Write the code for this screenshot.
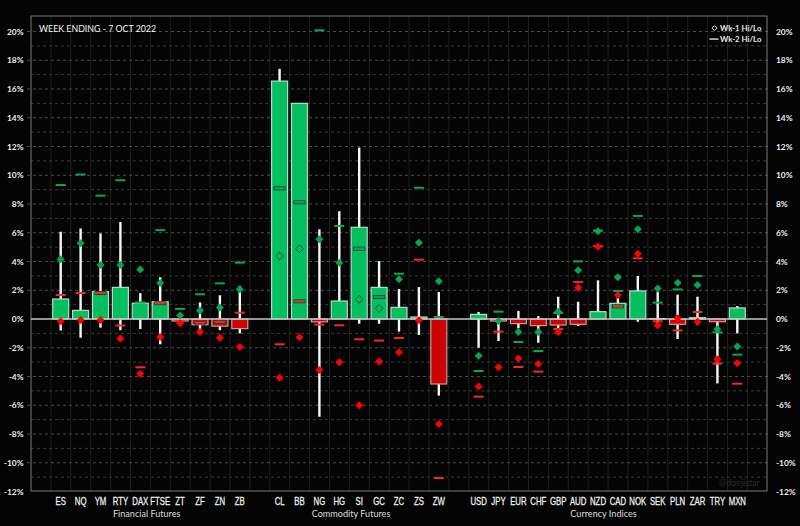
const FONT = "Lato, 'Open Sans', sans-serif";
const TICK_FONT = "'Liberation Sans', Arial, sans-serif";

const LEFT = 31;
const RIGHT = 767;
const TOP = 16;
const BOTTOM = 491;
const ZERO = 319;
const PCT = 14.375;
const SLOT = 19.9;

const y = (v) => ZERO - v * PCT;
const cx = (i) => 60.7 + SLOT * i;

// name, slot, close, wick hi, wick lo, wk1 hi, wk1 lo, wk2 hi, wk2 lo
const rows = [
  ["ES", 0, 1.39, 6.07, -0.8, 4.15, -0.16, 9.32, 1.67],
  ["NQ", 1, 0.6, 6.3, -1.3, 5.27, -0.07, 10.05, 1.81],
  ["YM", 2, 1.9, 5.95, -0.6, 3.75, -0.07, 8.58, 1.81],
  ["RTY", 3, 2.2, 6.75, -0.78, 3.75, -1.35, 9.65, -0.45],
  ["DAX", 4, 1.1, 1.8, -0.7, 3.45, -3.8, 1.15, -3.36],
  ["FTSE", 5, 1.2, 2.9, -1.76, 2.5, -1.25, 6.18, 1.1],
  ["ZT", 6, -0.14, 0, 0, 0.25, -0.32, 0.7, -0.14],
  ["ZF", 7, -0.4, 1.15, -1.05, 0.6, -0.9, 1.72, -0.25],
  ["ZN", 8, -0.5, 1.65, -0.78, 0.8, -1.3, 2.48, -0.2],
  ["ZB", 9, -0.67, 2.3, -1.0, 2.07, -1.95, 3.92, 0.44],
  ["CL", 11, 16.55, 17.4, 0, 4.38, -4.08, 9.09, -1.76],
  ["BB", 12, 15.0, 15.0, 0, 4.89, -1.27, 8.12, 1.23],
  ["NG", 13, -0.2, 6.24, -6.8, 5.54, -3.55, 20.08, -0.39],
  ["HG", 14, 1.25, 7.5, 0, 3.92, -3.0, 6.47, -0.44],
  ["SI", 15, 6.38, 11.92, -0.33, 1.37, -6.0, 4.89, -1.41],
  ["GC", 16, 2.2, 4.03, -0.33, 0.74, -2.95, 1.53, -1.5],
  ["ZC", 17, 0.81, 2.09, -0.88, 2.76, -2.32, 3.15, -1.32],
  ["ZS", 18, 0.14, 2.22, -1.11, 5.31, -0.09, 9.13, 4.13],
  ["ZW", 19, -4.52, 1.88, -5.33, 2.62, -7.3, 0.14, -11.06],
  ["USD", 21, 0.32, 0.49, -2.0, -2.55, -4.7, -3.62, -5.4],
  ["JPY", 22, -0.14, 0, -1.53, -0.14, -3.36, 0.51, -0.88],
  ["EUR", 23, -0.32, 0.56, -0.65, -0.9, -2.74, -1.6, -3.34],
  ["CHF", 24, -0.46, 0.2, -1.65, -0.9, -3.13, -2.23, -3.66],
  ["GBP", 25, -0.42, 1.55, -0.65, 0.51, -0.9, 0.42, -0.7],
  ["AUD", 26, -0.37, 1.2, -0.49, 3.39, 2.18, 4.01, 2.57],
  ["NZD", 27, 0.51, 2.69, 0, 6.1, 5.03, 6.15, 5.08],
  ["CAD", 28, 1.09, 1.7, 0, 2.9, 1.67, 1.95, 0.88],
  ["NOK", 29, 1.95, 2.99, -0.19, 6.24, 4.54, 7.17, 4.22],
  ["SEK", 30, 0.03, 1.88, -0.3, 2.13, -0.46, 1.14, -0.16],
  ["PLN", 31, -0.37, 1.69, -1.39, 2.53, 0.05, 2.06, -0.79],
  ["ZAR", 32, 0.09, 1.55, -0.42, 2.37, -0.19, 2.99, 0.49],
  ["TRY", 33, -0.19, 0, -4.48, -0.72, -2.8, -0.93, -3.1],
  ["MXN", 34, 0.77, 0.9, -1.0, -1.92, -3.08, -2.48, -4.5],
];

const inBar = (v, close) => (close >= 0 ? v < close && v > 0 : v > close && v < 0);

function Diamond({ x, v, color, close }) {
  const py = y(v);
  const d = `M${x} ${py - 4}L${x + 4} ${py}L${x} ${py + 4}L${x - 4} ${py}Z`;
  if (color === "green" && inBar(v, close)) {
    return <path d={d} fill="#04b85c" stroke="#0b5a3a" strokeWidth="1" />;
  }
  return <path d={d} fill={color === "green" ? "#04a557" : "#ff0000"} />;
}

function Dash({ x, v, color, close }) {
  const py = y(v);
  const fill = color === "green" ? "#04a857" : "#f8281c";
  return (
    <g>
      {inBar(v, close) && (
        <rect x={x - 5.5} y={py - 1.5} width="11" height="3" fill="none" stroke="#21402f" strokeWidth="1" />
      )}
      <rect x={x - 5} y={py - 1} width="10" height="2" fill={fill} />
    </g>
  );
}

export default function App() {
  const majors = [];
  const minors = [];
  for (let v = -12; v <= 20; v++) {
    if (v % 2 === 0) majors.push(v);
    else minors.push(v);
  }
  const slots = [];
  for (let i = 1; i < 37; i++) slots.push(LEFT + SLOT * i);

  return (
    <div className="w-[800px] h-[526px] overflow-hidden bg-[#040404]">
      <svg width="800" height="526" viewBox="0 0 800 526" className="block">
        {slots.map((x) => (
          <line key={x} x1={x} x2={x} y1={TOP} y2={BOTTOM} stroke="#1e1e1e" />
        ))}
        {minors.map((v) => (
          <line key={v} x1={LEFT} x2={RIGHT} y1={y(v)} y2={y(v)} stroke="#3a3a3a" strokeDasharray="3 3" />
        ))}
        {majors.filter((v) => v !== 0 && v !== -12).map((v) => (
          <line key={v} x1={LEFT - 4} x2={RIGHT + 4} y1={y(v)} y2={y(v)} stroke="#4c4c4c" strokeDasharray="3 3" />
        ))}
        <rect x={LEFT} y={TOP} width={RIGHT - LEFT} height={BOTTOM - TOP} fill="none" stroke="#7a7a7a" />

        {rows.map(([name, i, close, hi, lo]) => {
          const x = cx(i);
          return (
            <g key={name}>
              {hi !== lo && (
                <rect x={x - 1.2} y={y(hi)} width="2.4" height={y(lo) - y(hi)} fill="#f6f6f6" />
              )}
              <rect
                x={x - 8}
                y={Math.min(y(close), ZERO)}
                width="16"
                height={Math.abs(close) * PCT}
                fill={close >= 0 ? "#04bf60" : "#cc0404"}
                stroke={close >= 0 ? "#b9d9c6" : "#c89a9a"}
                strokeWidth="1.2"
              />
            </g>
          );
        })}

        <line x1={LEFT} x2={RIGHT} y1={ZERO} y2={ZERO} stroke="#c4c4c4" strokeWidth="1.3" />

        {rows.map(([name, i, close, , , g1, r1, g2, r2]) => {
          const x = cx(i);
          return (
            <g key={name}>
              <Dash x={x} v={g2} color="green" close={close} />
              <Dash x={x} v={r2} color="red" close={close} />
              <Diamond x={x} v={g1} color="green" close={close} />
              <Diamond x={x} v={r1} color="red" close={close} />
            </g>
          );
        })}

        {majors.map((v) => (
          <text key={v} x="23.5" y={y(v) + 3} textAnchor="end" fontSize="8.4" fontWeight="700" fontFamily={FONT} fill="#ececec">
            {v}%
          </text>
        ))}
        {majors.map((v) => (
          <text key={v} x="776" y={y(v) + 3} fontSize="8.4" fontWeight="700" fontFamily={FONT} fill="#ececec">
            {v}%
          </text>
        ))}

        {rows.map(([name, i]) => (
          <text
            key={name}
            transform={`translate(${cx(i)} 504.5) scale(0.78 1)`}
            textAnchor="middle"
            fontSize="10"
            stroke="#f2f2f2"
            strokeWidth="0.25"
            fontFamily={TICK_FONT}
            fill="#f2f2f2"
          >
            {name}
          </text>
        ))}

        <text x="146.7" y="517" textAnchor="middle" fontSize="9.1" fontFamily={FONT} fill="#dcdcdc">Financial Futures</text>
        <text x="351" y="517" textAnchor="middle" fontSize="9.1" fontFamily={FONT} fill="#dcdcdc">Commodity Futures</text>
        <text x="603.5" y="517" textAnchor="middle" fontSize="9.1" fontFamily={FONT} fill="#dcdcdc">Currency Indices</text>

        <text x="39" y="32" fontSize="8.8" fontFamily={FONT} fill="#f6f6f6">WEEK ENDING - 7 OCT 2022</text>

        <path d="M714.5 25.6L717 28.1L714.5 30.6L712 28.1Z" fill="none" stroke="#f2f2f2" strokeWidth="1" />
        <text x="720" y="31" fontSize="7.8" fontWeight="700" fontFamily={FONT} fill="#e8e8e8">Wk-1 Hi/Lo</text>
        <rect x="709.5" y="38.4" width="9" height="1.3" fill="#f2f2f2" />
        <text x="720" y="42" fontSize="7.8" fontWeight="700" fontFamily={FONT} fill="#e8e8e8">Wk-2 Hi/Lo</text>

        <text x="719" y="486" fontSize="8.8" fontFamily={FONT} fill="#2c2c2c">@doejistar</text>
      </svg>
    </div>
  );
}
